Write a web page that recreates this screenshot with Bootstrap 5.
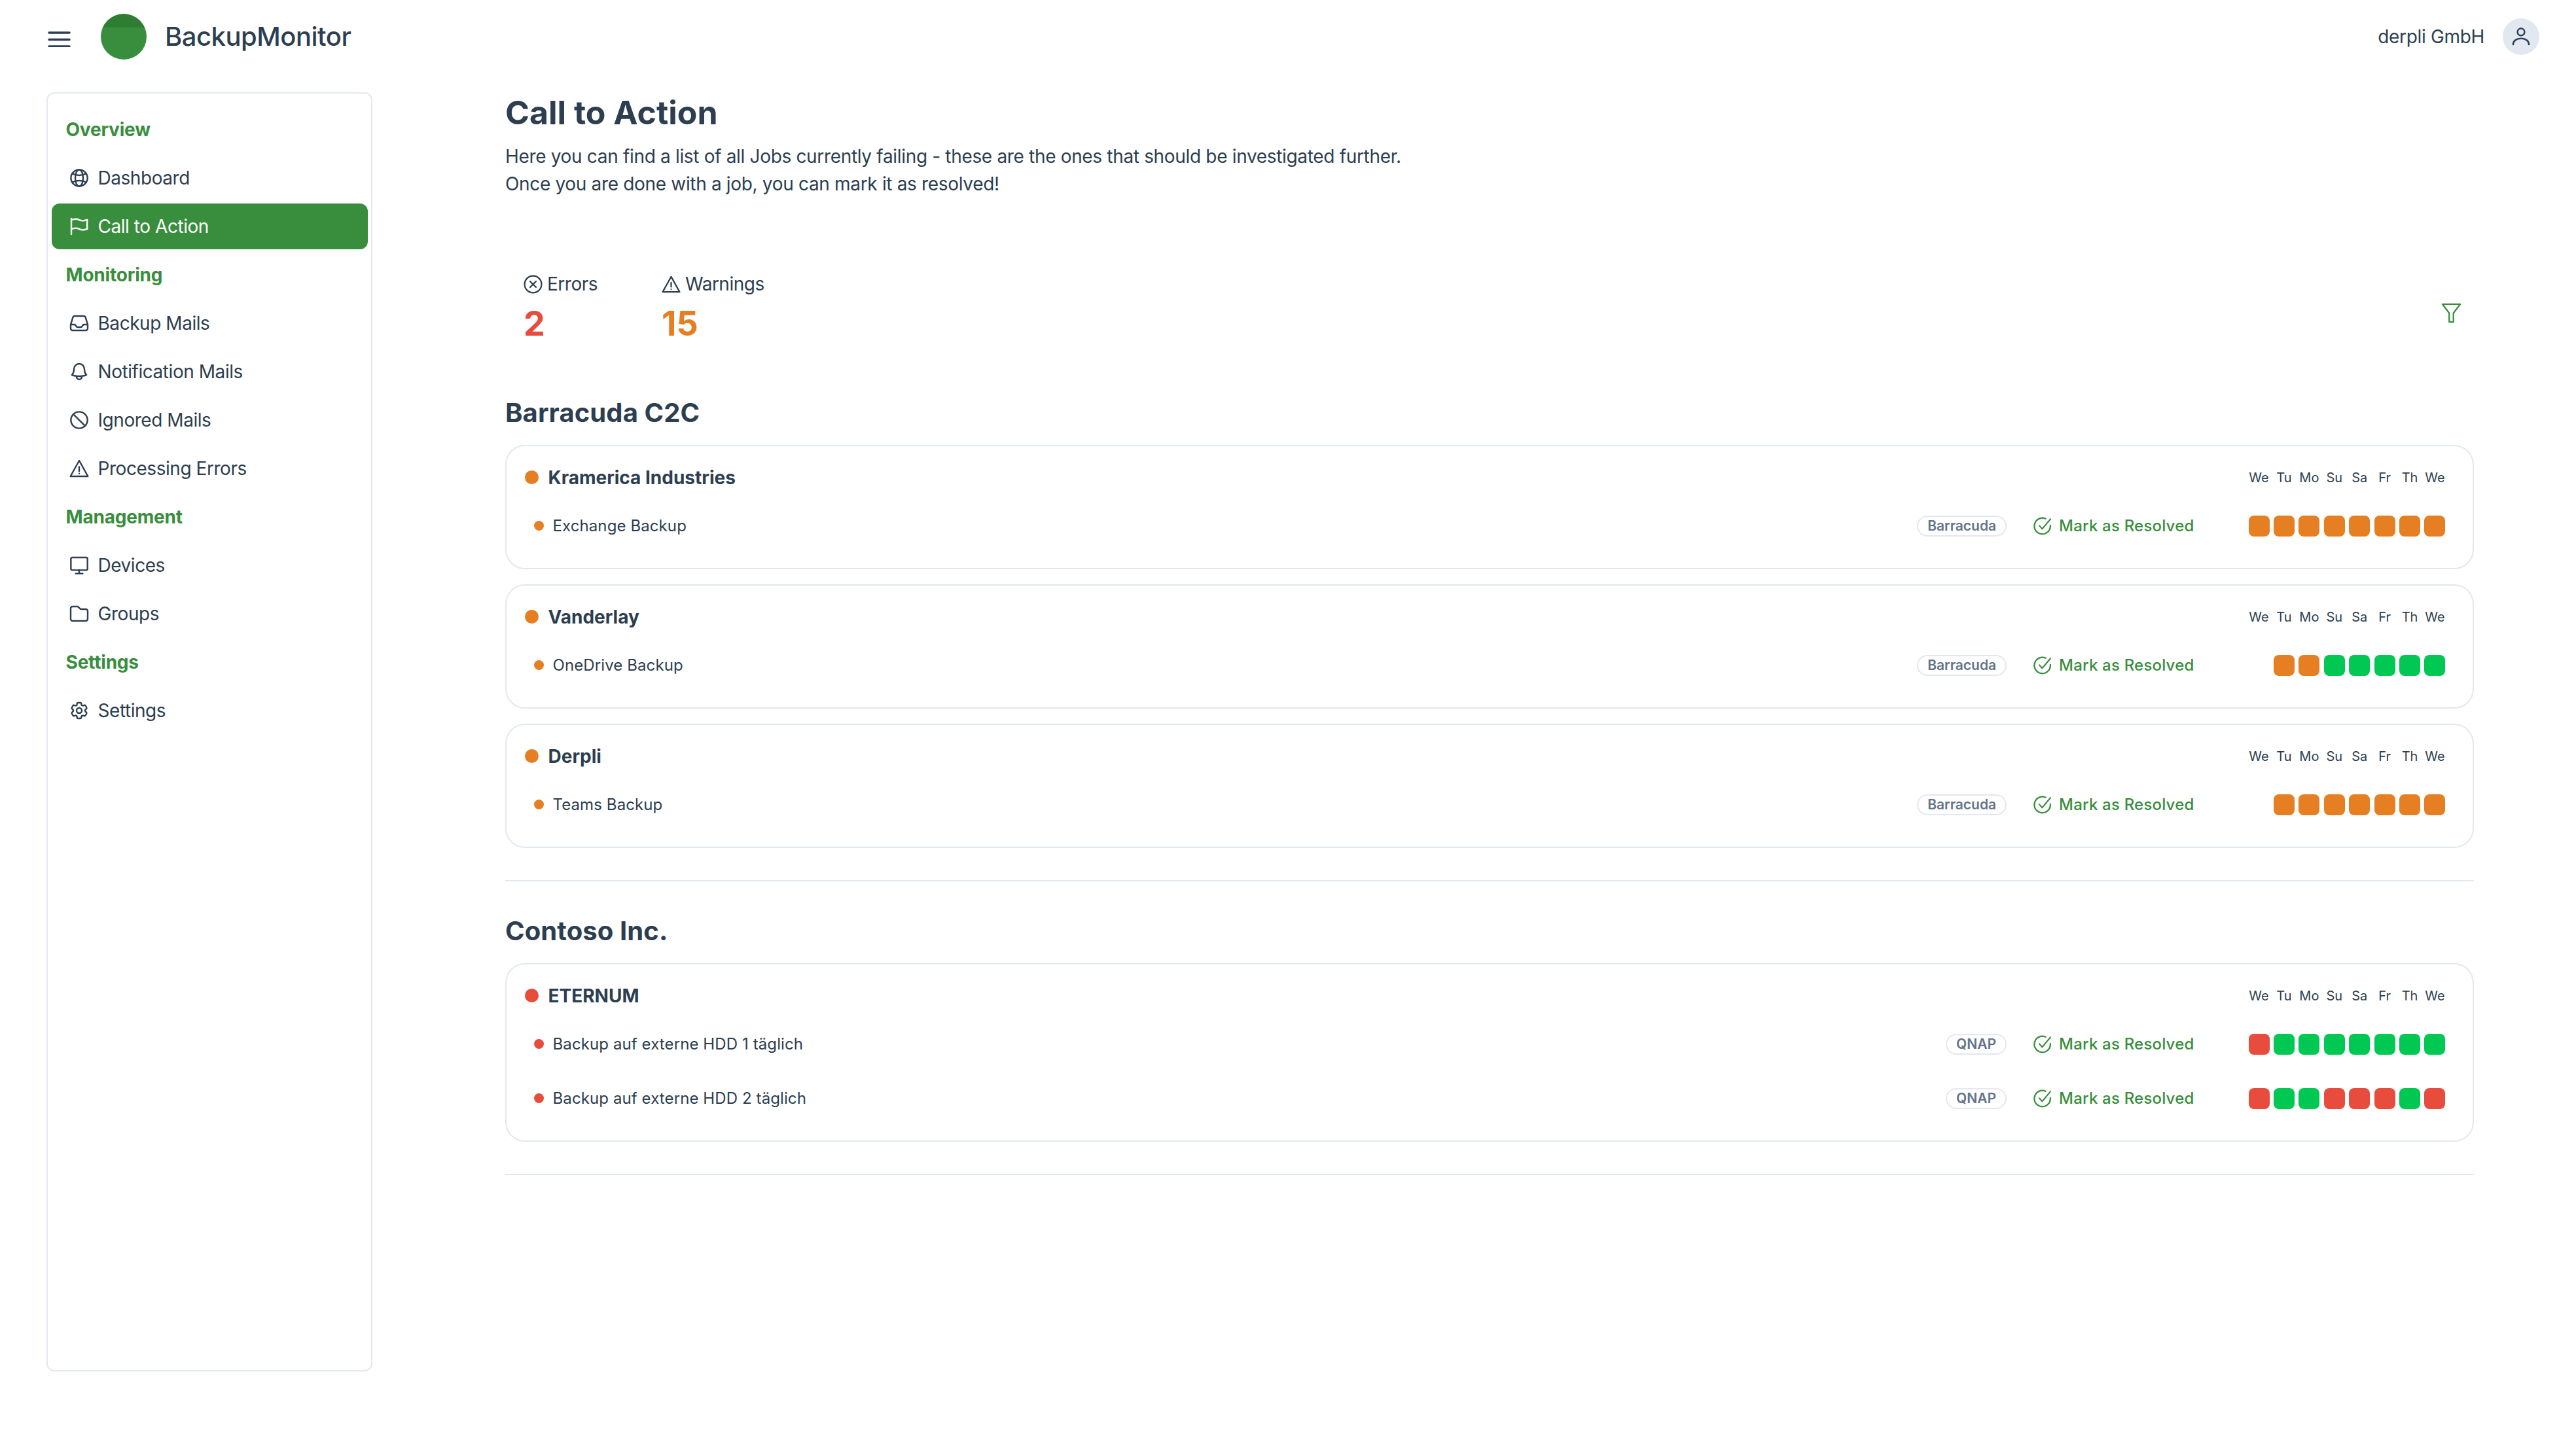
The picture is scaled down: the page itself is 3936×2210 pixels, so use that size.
<!DOCTYPE html>
<html lang="en">
<head>
    <meta charset="UTF-8">
    <title>BackupMonitor - Call to Action</title>
    <link href="https://cdn.jsdelivr.net/npm/bootstrap@5.3.0/dist/css/bootstrap.min.css" rel="stylesheet">
    <style>
        html, body { background: #fff; }
        body {
            font-family: Inter, "Liberation Sans", sans-serif;
            font-size: 28px;
            line-height: 42px;
            letter-spacing: -0.33px;
            color: #2c3e50;
            width: 3936px;
            height: 2210px;
            overflow: hidden;
        }
        svg { display: block; flex: none; fill: none; stroke: currentColor; stroke-linecap: round; stroke-linejoin: round; }

        /* top bar */
        .top-bar { height: 112px; padding: 0 56px 0 73px; }
        .menu-icon { width: 35px; height: 24px; margin-top: 7px; margin-right: 46px; }
        .brand-dot { width: 70px; height: 70px; border-radius: 50%; margin-right: 28px; background: linear-gradient(#2e7d32 30%, #388e3c 30%); }
        .brand-name { font-size: 40px; font-weight: 500; line-height: 56px; letter-spacing: -0.5px; color: #2c3e50; }
        .user-dot { width: 56px; height: 56px; border-radius: 50%; background: #e2e8f0; margin-left: 28px; }
        .user-dot svg { width: 34px; height: 34px; }

        /* sidebar */
        .side-box { width: 498px; height: 1955px; margin: 29px 0 0 71px; padding: 19.5px 5.5px; border: 2.5px solid #e2e8f0; border-radius: 12px; gap: 4px; }
        .side-head, .side-link { height: 70px; flex: none; }
        .side-head { padding-left: 22px; font-weight: 700; letter-spacing: -0.2px; color: #388e3c; display: flex; align-items: center; }
        .side-link { padding: 0 0 0 26px; gap: 13px; letter-spacing: -0.45px; color: #2c3e50; border-radius: 12px; }
        .side-link:hover, .side-link:focus { color: #2c3e50; }
        .side-link.active, .side-link.active:hover { background: #388e3c; color: #fff; }
        .side-link svg { width: 32px; height: 32px; stroke-width: 1.8; }

        /* main */
        .main-col { width: 3008px; margin-left: 203px; padding-top: 30px; }
        .page-title { font-size: 50px; line-height: 60px; font-weight: 700; letter-spacing: 0; color: #2c3e50; margin: 0 0 15.5px; }
        .intro { margin: 0; }
        .stat-row { margin-top: 111.5px; padding: 0 19.5px 0 26.5px; }
        .stat-box { width: 211px; }
        .stat-label { gap: 6.5px; letter-spacing: -0.5px; }
        .stat-label svg { width: 31px; height: 31px; stroke-width: 1.7; }
        .stat-num { font-size: 52px; line-height: 60px; font-weight: 700; letter-spacing: 0; margin: 9.5px 0 0 1.5px; }
        .num-red { color: #e74c3c; }
        .num-orange { color: #e67e22; }
        .filter-icon { width: 31px; height: 31px; stroke-width: 1.8; margin-top: 20px; color: #388e3c; }
        .group-title { font-size: 40px; line-height: 50px; font-weight: 700; letter-spacing: 0.1px; color: #2c3e50; margin: 0 0 24px; }
        .first-group { margin-top: 81.5px; }
        .job-box { border: 2.5px solid #e2e8f0; border-radius: 30px; padding: 27.5px 41.5px 39.5px 27.5px; margin-bottom: 23px; }
        .cust-row { height: 40px; }
        .cust-name { font-weight: 700; letter-spacing: 0; margin-left: 15px; line-height: 40px; }
        .big-dot { width: 21px; height: 21px; border-radius: 50%; flex: none; }
        .small-dot { width: 15px; height: 15px; border-radius: 50%; flex: none; margin-right: 14px; }
        .job-row { height: 50px; margin-top: 33px; padding-left: 14px; font-size: 24px; letter-spacing: 0.1px; }
        .job-row.first-row { margin-top: 29px; }
        .type-pill { border: 2.5px solid #e2e8f0; border-radius: 16px; height: 32px; line-height: 27px; padding: 0 14px; font-size: 21px; font-weight: 600; letter-spacing: 0; color: #64748b; margin-right: 40px; }
        .resolve-link { gap: 10px; color: #388e3c; font-weight: 500; letter-spacing: 0.2px; text-decoration: none; margin-right: 83px; }
        .resolve-link svg { width: 30px; height: 30px; stroke-width: 1.8; }
        .day-strip { width: 301px; flex: none; display: grid; grid-template-columns: repeat(8, 32px); justify-content: space-between; }
        .day-name { font-size: 20px; line-height: 40px; letter-spacing: 0; white-space: nowrap; display: flex; justify-content: center; }
        .day-sq { width: 32px; height: 32px; border-radius: 8px; }
        .sq-o { background: #e67e22; }
        .sq-g { background: #00c853; }
        .sq-r { background: #e74c3c; }
        .group-line { border: 0; border-top: 2.5px solid #e2e8f0; opacity: 1; margin: 49px 0 51px; }
    </style>
</head>
<body>
    <svg width="0" height="0" class="position-absolute">
        <defs>
            <symbol id="i-globe" viewBox="0 0 24 24"><circle cx="12" cy="12" r="9.5"/><ellipse cx="12" cy="12" rx="4.5" ry="9.5"/><path d="M4 7c4.500 2.600 11.500 2.600 16 0M4 17c4.500-2.600 11.500-2.600 16 0"/></symbol>
            <symbol id="i-flag" viewBox="0 0 24 24"><path d="M3 3v1.500M3 21v-6m0 0l2.770-.693a9 9 0 016.208.682l.108.054a9 9 0 006.086.710l3.114-.732a48.524 48.524 0 01-.005-10.499l-3.110.732a9 9 0 01-6.085-.711l-.108-.054a9 9 0 00-6.208-.682L3 4.500M3 15V4.500"/></symbol>
            <symbol id="i-inbox" viewBox="0 0 24 24"><path d="M2.250 13.500h3.860a2.250 2.250 0 012.012 1.244l.256.512a2.250 2.250 0 002.013 1.244h3.218a2.250 2.250 0 002.013-1.244l.256-.512a2.250 2.250 0 012.013-1.244h3.859m-19.500.338V18a2.250 2.250 0 002.250 2.250h15A2.250 2.250 0 0021.750 18v-4.162c0-.224-.034-.447-.1-.661L19.240 5.338a2.250 2.250 0 00-2.150-1.588H6.911a2.250 2.250 0 00-2.150 1.588L2.350 13.177a2.250 2.250 0 00-.1.661z"/></symbol>
            <symbol id="i-bell" viewBox="0 0 24 24"><path d="M14.857 17.082a23.848 23.848 0 005.454-1.310A8.967 8.967 0 0118 9.750V9A6 6 0 006 9v.750a8.967 8.967 0 01-2.312 6.022c1.733.640 3.560 1.085 5.455 1.310m5.714 0a24.255 24.255 0 01-5.714 0m5.714 0a3 3 0 11-5.714 0"/></symbol>
            <symbol id="i-block" viewBox="0 0 24 24"><circle cx="12" cy="12" r="9.500"/><path d="M5.300 5.300l13.400 13.400"/></symbol>
            <symbol id="i-warn" viewBox="0 0 24 24"><path d="M12 3L22 21H2zM12 10v5M12 17.800v.1"/></symbol>
            <symbol id="i-screen" viewBox="0 0 24 24"><rect x="2.500" y="3" width="19" height="14.500" rx="1.500"/><path d="M12 17.500V21.500M8 21.500h8"/></symbol>
            <symbol id="i-folder" viewBox="0 0 24 24"><path d="M13.060 6.310l-2.120-2.120a1.500 1.500 0 00-1.061-.440H4.500A2.250 2.250 0 002.250 6v12a2.250 2.250 0 002.250 2.250h15A2.250 2.250 0 0021.750 18V9a2.250 2.250 0 00-2.250-2.250h-5.379a1.500 1.500 0 01-1.060-.440z"/></symbol>
            <symbol id="i-cog" viewBox="0 0 24 24"><path d="M9.594 3.940c.090-.542.560-.940 1.110-.940h2.593c.550 0 1.020.398 1.110.940l.213 1.281c.063.374.313.686.645.870.074.040.147.083.220.127.324.196.720.257 1.075.124l1.217-.456a1.125 1.125 0 011.370.490l1.296 2.247a1.125 1.125 0 01-.260 1.431l-1.003.827c-.293.240-.438.613-.431.992a6.759 6.759 0 010 .255c-.007.378.138.750.430.990l1.005.828c.424.350.534.954.260 1.430l-1.298 2.247a1.125 1.125 0 01-1.369.491l-1.217-.456c-.355-.133-.750-.072-1.076.124a6.570 6.570 0 01-.220.128c-.331.183-.581.495-.644.869l-.213 1.280c-.090.543-.560.941-1.110.941h-2.594c-.550 0-1.020-.398-1.110-.940l-.213-1.281c-.062-.374-.312-.686-.644-.870a6.520 6.520 0 01-.220-.127c-.325-.196-.720-.257-1.076-.124l-1.217.456a1.125 1.125 0 01-1.369-.490l-1.297-2.247a1.125 1.125 0 01.260-1.431l1.004-.827c.292-.240.437-.613.430-.992a6.932 6.932 0 010-.255c.007-.378-.138-.750-.430-.990l-1.004-.828a1.125 1.125 0 01-.260-1.430l1.297-2.247a1.125 1.125 0 011.370-.491l1.216.456c.356.133.751.072 1.076-.124.072-.044.146-.087.220-.128.332-.183.582-.495.644-.869l.214-1.281z"/><circle cx="12" cy="12" r="3"/></symbol>
            <symbol id="i-xcircle" viewBox="0 0 24 24"><circle cx="12" cy="12" r="10"/><path d="M8.500 8.500l7 7M15.500 8.500l-7 7"/></symbol>
            <symbol id="i-check" viewBox="0 0 24 24"><path d="M21.500 11v1a9.800 9.800 0 11-5.800-8.950"/><path d="M21.500 3.500L11.500 15.500 8 11.500"/></symbol>
        </defs>
    </svg>

    <!-- Header -->
    <header class="top-bar d-flex align-items-center">
        <svg class="menu-icon" viewBox="0 0 35 24" stroke-width="3.500"><path d="M2 2h31M2 12.500h31M2 23h31"/></svg>
        <div class="brand-dot"></div>
        <div class="brand-name">BackupMonitor</div>
        <div class="ms-auto">derpli GmbH</div>
        <div class="user-dot d-flex align-items-center justify-content-center">
            <svg viewBox="0 0 24 24" stroke-width="1.800"><circle cx="12" cy="7" r="3.800"/><path d="M3.500 20.500c0-4 3.800-6.500 8.500-6.500s8.500 2.500 8.500 6.500"/></svg>
        </div>
    </header>

    <div class="d-flex">
        <!-- Sidebar -->
        <nav class="side-box nav flex-column flex-nowrap">
            <div class="side-head">Overview</div>
            <a class="nav-link side-link d-flex align-items-center" href="#"><svg><use href="#i-globe"/></svg>Dashboard</a>
            <a class="nav-link side-link active d-flex align-items-center" href="#"><svg><use href="#i-flag"/></svg>Call to Action</a>
            <div class="side-head">Monitoring</div>
            <a class="nav-link side-link d-flex align-items-center" href="#"><svg><use href="#i-inbox"/></svg>Backup Mails</a>
            <a class="nav-link side-link d-flex align-items-center" href="#"><svg><use href="#i-bell"/></svg>Notification Mails</a>
            <a class="nav-link side-link d-flex align-items-center" href="#"><svg><use href="#i-block"/></svg>Ignored Mails</a>
            <a class="nav-link side-link d-flex align-items-center" href="#"><svg><use href="#i-warn"/></svg>Processing Errors</a>
            <div class="side-head">Management</div>
            <a class="nav-link side-link d-flex align-items-center" href="#"><svg><use href="#i-screen"/></svg>Devices</a>
            <a class="nav-link side-link d-flex align-items-center" href="#"><svg><use href="#i-folder"/></svg>Groups</a>
            <div class="side-head">Settings</div>
            <a class="nav-link side-link d-flex align-items-center" href="#"><svg><use href="#i-cog"/></svg>Settings</a>
        </nav>

        <!-- Content -->
        <main class="main-col">
            <h1 class="page-title">Call to Action</h1>
            <p class="intro">Here you can find a list of all Jobs currently failing - these are the ones that should be investigated further.<br>Once you are done with a job, you can mark it as resolved!</p>

            <div class="stat-row d-flex align-items-center">
                <div class="stat-box">
                    <div class="stat-label d-flex align-items-center"><svg><use href="#i-xcircle"/></svg>Errors</div>
                    <div class="stat-num num-red">2</div>
                </div>
                <div class="stat-box">
                    <div class="stat-label d-flex align-items-center"><svg><use href="#i-warn"/></svg>Warnings</div>
                    <div class="stat-num num-orange">15</div>
                </div>
                <svg class="filter-icon ms-auto" viewBox="0 0 24 24"><path d="M1.500 1.500h21L14.500 12v10.500h-5V12z"/></svg>
            </div>

            <h2 class="group-title first-group">Barracuda C2C</h2>

            <div class="job-box">
                <div class="cust-row d-flex align-items-center">
                    <span class="big-dot sq-o"></span><span class="cust-name">Kramerica Industries</span>
                    <div class="day-strip ms-auto"><span class="day-name">We</span><span class="day-name">Tu</span><span class="day-name">Mo</span><span class="day-name">Su</span><span class="day-name">Sa</span><span class="day-name">Fr</span><span class="day-name">Th</span><span class="day-name">We</span></div>
                </div>
                <div class="job-row first-row d-flex align-items-center">
                    <span class="small-dot sq-o"></span><span>Exchange Backup</span>
                    <span class="type-pill ms-auto">Barracuda</span>
                    <a class="resolve-link d-flex align-items-center" href="#"><svg><use href="#i-check"/></svg>Mark as Resolved</a>
                    <div class="day-strip"><span class="day-sq sq-o"></span><span class="day-sq sq-o"></span><span class="day-sq sq-o"></span><span class="day-sq sq-o"></span><span class="day-sq sq-o"></span><span class="day-sq sq-o"></span><span class="day-sq sq-o"></span><span class="day-sq sq-o"></span></div>
                </div>
            </div>

            <div class="job-box">
                <div class="cust-row d-flex align-items-center">
                    <span class="big-dot sq-o"></span><span class="cust-name">Vanderlay</span>
                    <div class="day-strip ms-auto"><span class="day-name">We</span><span class="day-name">Tu</span><span class="day-name">Mo</span><span class="day-name">Su</span><span class="day-name">Sa</span><span class="day-name">Fr</span><span class="day-name">Th</span><span class="day-name">We</span></div>
                </div>
                <div class="job-row first-row d-flex align-items-center">
                    <span class="small-dot sq-o"></span><span>OneDrive Backup</span>
                    <span class="type-pill ms-auto">Barracuda</span>
                    <a class="resolve-link d-flex align-items-center" href="#"><svg><use href="#i-check"/></svg>Mark as Resolved</a>
                    <div class="day-strip"><span></span><span class="day-sq sq-o"></span><span class="day-sq sq-o"></span><span class="day-sq sq-g"></span><span class="day-sq sq-g"></span><span class="day-sq sq-g"></span><span class="day-sq sq-g"></span><span class="day-sq sq-g"></span></div>
                </div>
            </div>

            <div class="job-box">
                <div class="cust-row d-flex align-items-center">
                    <span class="big-dot sq-o"></span><span class="cust-name">Derpli</span>
                    <div class="day-strip ms-auto"><span class="day-name">We</span><span class="day-name">Tu</span><span class="day-name">Mo</span><span class="day-name">Su</span><span class="day-name">Sa</span><span class="day-name">Fr</span><span class="day-name">Th</span><span class="day-name">We</span></div>
                </div>
                <div class="job-row first-row d-flex align-items-center">
                    <span class="small-dot sq-o"></span><span>Teams Backup</span>
                    <span class="type-pill ms-auto">Barracuda</span>
                    <a class="resolve-link d-flex align-items-center" href="#"><svg><use href="#i-check"/></svg>Mark as Resolved</a>
                    <div class="day-strip"><span></span><span class="day-sq sq-o"></span><span class="day-sq sq-o"></span><span class="day-sq sq-o"></span><span class="day-sq sq-o"></span><span class="day-sq sq-o"></span><span class="day-sq sq-o"></span><span class="day-sq sq-o"></span></div>
                </div>
            </div>

            <hr class="group-line">

            <h2 class="group-title">Contoso Inc.</h2>

            <div class="job-box">
                <div class="cust-row d-flex align-items-center">
                    <span class="big-dot sq-r"></span><span class="cust-name">ETERNUM</span>
                    <div class="day-strip ms-auto"><span class="day-name">We</span><span class="day-name">Tu</span><span class="day-name">Mo</span><span class="day-name">Su</span><span class="day-name">Sa</span><span class="day-name">Fr</span><span class="day-name">Th</span><span class="day-name">We</span></div>
                </div>
                <div class="job-row first-row d-flex align-items-center">
                    <span class="small-dot sq-r"></span><span>Backup auf externe HDD 1 täglich</span>
                    <span class="type-pill ms-auto">QNAP</span>
                    <a class="resolve-link d-flex align-items-center" href="#"><svg><use href="#i-check"/></svg>Mark as Resolved</a>
                    <div class="day-strip"><span class="day-sq sq-r"></span><span class="day-sq sq-g"></span><span class="day-sq sq-g"></span><span class="day-sq sq-g"></span><span class="day-sq sq-g"></span><span class="day-sq sq-g"></span><span class="day-sq sq-g"></span><span class="day-sq sq-g"></span></div>
                </div>
                <div class="job-row d-flex align-items-center">
                    <span class="small-dot sq-r"></span><span>Backup auf externe HDD 2 täglich</span>
                    <span class="type-pill ms-auto">QNAP</span>
                    <a class="resolve-link d-flex align-items-center" href="#"><svg><use href="#i-check"/></svg>Mark as Resolved</a>
                    <div class="day-strip"><span class="day-sq sq-r"></span><span class="day-sq sq-g"></span><span class="day-sq sq-g"></span><span class="day-sq sq-r"></span><span class="day-sq sq-r"></span><span class="day-sq sq-r"></span><span class="day-sq sq-g"></span><span class="day-sq sq-r"></span></div>
                </div>
            </div>

            <hr class="group-line">
        </main>
    </div>

    <script src="https://cdn.jsdelivr.net/npm/bootstrap@5.3.0/dist/js/bootstrap.bundle.min.js"></script>
</body>
</html>
